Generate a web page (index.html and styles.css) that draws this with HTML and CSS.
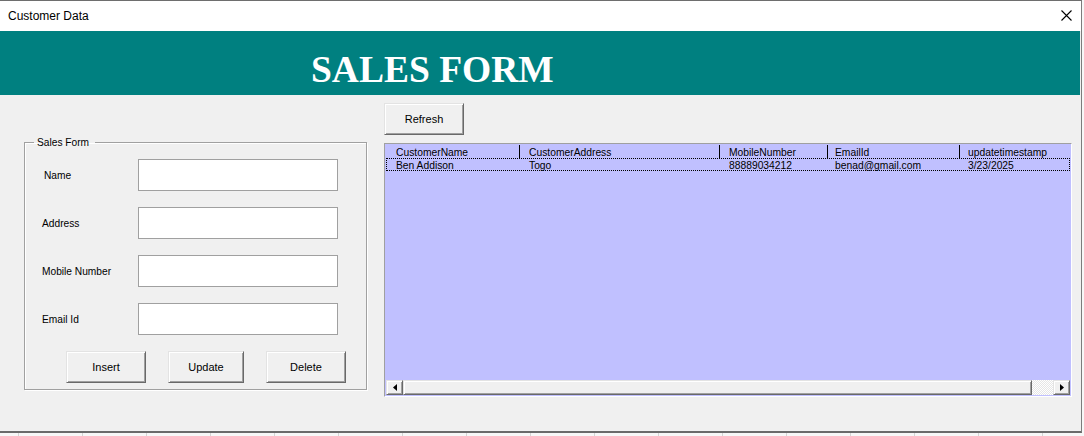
FILE: index.html
```html
<!DOCTYPE html>
<html>
<head>
<meta charset="utf-8">
<title>Customer Data</title>
<link rel="stylesheet" href="styles.css">
</head>
<body>
<div class="window">
  <div class="titlebar">
    <span class="title">Customer Data</span>
    <svg class="close" width="11" height="11" viewBox="0 0 11 11"><path d="M0.5 0.5 L10.5 10.5 M10.5 0.5 L0.5 10.5" stroke="#000" stroke-width="1.1" fill="none"/></svg>
  </div>
  <div class="banner"><h1 class="banner-title">SALES FORM</h1></div>
  <div class="main">
    <div class="left">
      <fieldset class="frame">
        <legend class="frame-legend">Sales Form</legend>
        <div class="form-grid">
          <label class="field-label label-name">Name</label><input class="textbox" type="text">
          <label class="field-label">Address</label><input class="textbox" type="text">
          <label class="field-label">Mobile Number</label><input class="textbox" type="text">
          <label class="field-label">Email Id</label><input class="textbox" type="text">
          <div class="btn-row">
            <button class="btn btn-wide">Insert</button>
            <button class="btn btn-narrow">Update</button>
            <button class="btn btn-wide">Delete</button>
          </div>
        </div>
      </fieldset>
    </div>
    <div class="right">
      <button class="btn btn-wide">Refresh</button>
      <div class="listbox">
        <div class="list-body">
          <div class="list-row list-head">
            <span class="cell c1">CustomerName</span>
            <span class="cell c2">CustomerAddress</span>
            <span class="cell c3">MobileNumber</span>
            <span class="cell c4">EmailId</span>
            <span class="cell c5">updatetimestamp</span>
          </div>
          <div class="list-row list-item">
            <span class="cell c1">Ben Addison</span>
            <span class="cell c2">Togo</span>
            <span class="cell c3">88889034212</span>
            <span class="cell c4">benad@gmail.com</span>
            <span class="cell c5">3/23/2025</span>
          </div>
        </div>
        <div class="hscroll">
          <div class="raised sb-btn"><svg width="4" height="7" viewBox="0 0 4 7"><path d="M4 0 L0 3.5 L4 7 Z" fill="#000"/></svg></div>
          <div class="raised sb-thumb"></div>
          <div class="sb-track"></div>
          <div class="raised sb-btn"><svg width="4" height="7" viewBox="0 0 4 7"><path d="M0 0 L4 3.5 L0 7 Z" fill="#000"/></svg></div>
        </div>
      </div>
    </div>
  </div>
</div>
</body>
</html>
```
FILE: styles.css
```css
html, body {
  margin: 0;
  padding: 0;
}
body {
  width: 1084px;
  height: 436px;
  overflow: hidden;
  background-color: #f7f7f7;
  background-image: repeating-linear-gradient(90deg, transparent 0 18px, #d4d4d4 18px 19px, transparent 19px 64px);
  font-family: "Liberation Sans", Arial, sans-serif;
  color: #000;
}
.window {
  width: 1081px;
  height: 430px;
  border-top: 1px solid #6e6e6e;
  border-right: 1px solid #7c7c7c;
  border-bottom: 2px solid #6a6a6a;
  background: #f0f0f0;
  display: flex;
  flex-direction: column;
}
.titlebar {
  height: 30px;
  flex: none;
  background: #fff;
  display: flex;
  align-items: center;
  justify-content: space-between;
  padding: 0 9px 0 8px;
}
.title {
  font-size: 12px;
}
.close {
  align-self: flex-start;
  margin-top: 9px;
}
.banner {
  height: 64px;
  flex: none;
  box-sizing: border-box;
  margin-right: 1px;
  background: #008080;
  padding: 17px 0 0 311px;
}
.banner-title {
  margin: 0;
  font-family: "Liberation Serif", "Times New Roman", serif;
  font-weight: bold;
  font-size: 37.5px;
  line-height: normal;
  color: #fff;
}
.main {
  flex: 1;
  display: flex;
}
.left {
  width: 384px;
  flex: none;
  box-sizing: border-box;
  padding: 41px 0 0 24px;
}
.frame {
  margin: 0;
  width: 343px;
  box-sizing: border-box;
  border: 1px solid #a0a0a0;
  box-shadow: 1px 1px 0 #fff, inset 1px 1px 0 #fff;
  padding: 10px 0 6px 0;
  min-width: 0;
}
.frame-legend {
  margin-left: 9px;
  padding: 0 6px 0 3px;
  font-size: 10.2px;
  line-height: 13px;
}
.form-grid {
  display: grid;
  grid-template-columns: 96px 200px;
  row-gap: 16px;
  margin-left: 17px;
}
.field-label {
  align-self: center;
  font-size: 10.2px;
}
.label-name {
  padding-left: 2px;
}
.textbox {
  width: 200px;
  height: 32px;
  box-sizing: border-box;
  margin: 0;
  padding: 0;
  border: 1px solid #a0a0a0;
  background: #fff;
  outline: none;
}
.btn-row {
  grid-column: 1 / -1;
  display: flex;
  gap: 22px;
  padding-left: 24px;
}
.btn {
  flex: none;
  height: 32px;
  box-sizing: border-box;
  margin: 0;
  padding: 0;
  font-family: "Liberation Sans", Arial, sans-serif;
  font-size: 11px;
  color: #000;
  background: #f0f0f0;
  border: 1px solid;
  border-color: #e3e3e3 #696969 #696969 #e3e3e3;
  box-shadow: inset 1px 1px 0 #fff, inset -1px -1px 0 #a0a0a0;
}
.btn-wide {
  width: 80px;
}
.btn-narrow {
  width: 76px;
}
.right {
  flex: 1;
  display: flex;
  flex-direction: column;
  align-items: flex-start;
  padding-top: 8px;
}
.listbox {
  margin-top: 8px;
  width: 688px;
  height: 254px;
  box-sizing: border-box;
  border: 1px solid;
  border-color: #a0a0a0 #fff #fff #a0a0a0;
  padding: 1px;
  background: #c0c0ff;
  display: flex;
  flex-direction: column;
}
.list-body {
  flex: 1;
  background: #c0c0ff;
}
.list-row {
  display: grid;
  height: 13px;
  box-sizing: border-box;
  font-size: 10.3px;
  white-space: nowrap;
}
.list-head {
  grid-template-columns: 133px 200px 108px 132px 1fr;
  line-height: 13px;
}
.list-head .cell {
  padding-top: 1px;
  height: 13px;
  box-sizing: border-box;
}
.list-item {
  grid-template-columns: 132px 200px 108px 132px 1fr;
  border: 1px dotted #000;
  line-height: 11px;
}
.list-item .cell {
  padding-top: 1px;
  height: 11px;
  box-sizing: border-box;
}
.cell {
  overflow: visible;
  border-left: 1px solid transparent;
}
.list-head .c2, .list-head .c3, .list-head .c4, .list-head .c5 {
  border-left-color: #000;
}
.list-head .c1 {
  padding-left: 10px;
  border-left: 0;
}
.list-item .c1 {
  padding-left: 9px;
  border-left: 0;
}
.c2 { padding-left: 9px; }
.c3 { padding-left: 9px; }
.c4 { padding-left: 7px; }
.c5 { padding-left: 8px; }
.hscroll {
  height: 15px;
  flex: none;
  display: flex;
}
.raised {
  box-sizing: border-box;
  background: #f0f0f0;
  border: 1px solid;
  border-color: #e3e3e3 #696969 #696969 #e3e3e3;
  box-shadow: inset 1px 1px 0 #fff, inset -1px -1px 0 #a0a0a0;
}
.sb-btn {
  width: 17px;
  flex: none;
  display: flex;
  align-items: center;
  justify-content: center;
}
.sb-thumb {
  flex: 1;
}
.sb-track {
  width: 21px;
  flex: none;
  background-color: #fff;
  background-image: repeating-conic-gradient(#e6e6e6 0 25%, #fff 0 50%);
  background-size: 2px 2px;
}
```
